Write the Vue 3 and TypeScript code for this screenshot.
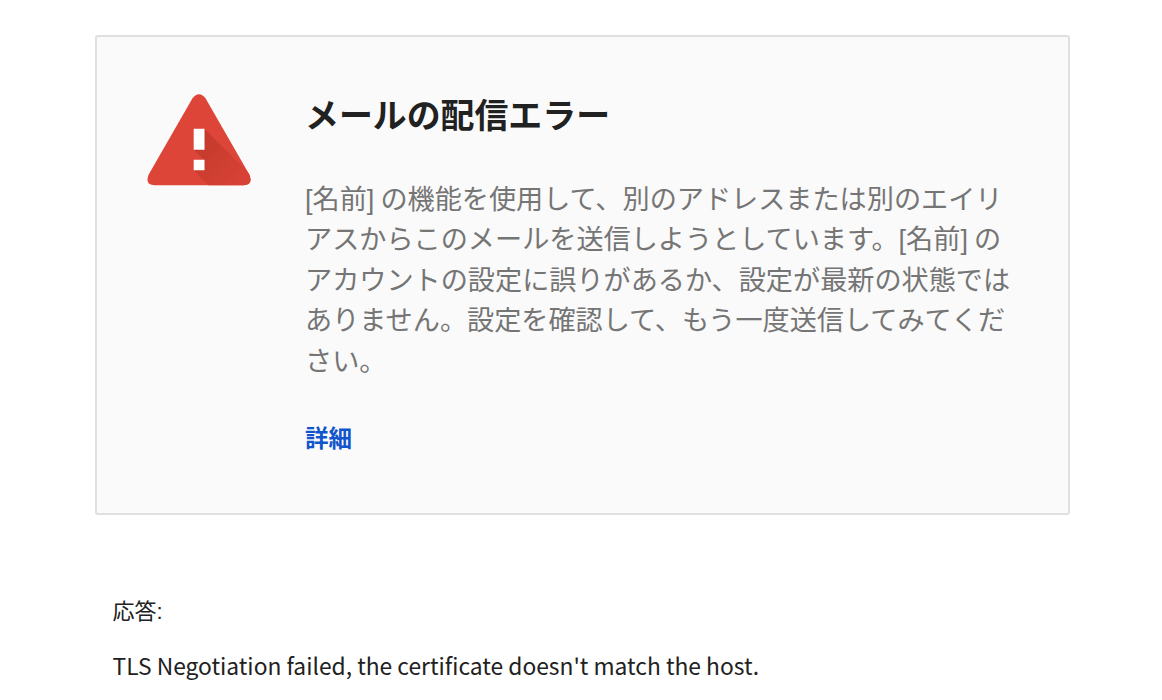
<template>
  <div class="page">
    <section class="card">
      <svg class="warning-icon" viewBox="0 0 104 92" width="104" height="92">
        <defs>
          <linearGradient id="shadow" x1="50" y1="55" x2="92" y2="92" gradientUnits="userSpaceOnUse">
            <stop offset="0" stop-color="#c43b2d" />
            <stop offset="1" stop-color="#d84235" />
          </linearGradient>
          <clipPath id="triangle">
            <path :d="trianglePath" />
          </clipPath>
        </defs>
        <path :d="trianglePath" fill="#de4539" />
        <!-- 感嘆符の影 -->
        <path
          d="M57.5 35 L104 81 V92 H62 L47 76.5 L57 66 L47 56 Z"
          fill="url(#shadow)"
          clip-path="url(#triangle)"
        />
        <path d="M46.7 34.7h10.8v21H46.7zM46.7 65.7h10.8v10.6H46.7z" fill="#fff" />
      </svg>
      <div class="content">
        <h1 class="title">メールの配信エラー</h1>
        <p class="message">
          <span v-for="line in lines" :key="line" class="line">{{ line }}</span>
        </p>
        <a class="detail">詳細</a>
      </div>
    </section>
    <section class="response">
      <p class="label">応答:</p>
      <p class="reason">TLS Negotiation failed, the certificate doesn't match the host.</p>
    </section>
  </div>
</template>

<script setup lang="ts">
// 角の丸い三角形
const trianglePath =
  "M45.5 4.2 Q52 -3.6 58.5 4.2 L102.3 80.5 Q106.5 90.8 96.5 91.3 H7.5 Q-2.5 90.8 1.7 80.5 Z";

const lines: string[] = [
  "[名前] の機能を使用して、別のアドレスまたは別のエイリ",
  "アスからこのメールを送信しようとしています。[名前] の",
  "アカウントの設定に誤りがあるか、設定が最新の状態では",
  "ありません。設定を確認して、もう一度送信してみてくだ",
  "さい。",
];
</script>

<style>
body {
  margin: 0;
  background: #fff;
}
</style>

<style scoped>
.page {
  box-sizing: border-box;
  height: 700px;
  padding: 35px 92px 0 95px;
  overflow: hidden;
  color: #212121;
  font-family: "Liberation Sans", "Noto Sans CJK JP", sans-serif;
}

.card {
  box-sizing: border-box;
  display: flex;
  width: 975px;
  height: 480px;
  padding: 57px 50px 0;
  border: 2px solid #e0e0e0;
  border-radius: 3px;
  background: #fafafa;
}

.warning-icon {
  flex: none;
}

.content {
  margin-left: 54px;
}

.title {
  margin: 1px 0 0;
  font-size: 33.9px;
  line-height: 42px;
  font-weight: 700;
}

.message {
  margin: 43px 0 0;
  color: #757575;
  font-size: 27.15px;
  line-height: 40.4px;
  word-spacing: -1.5px;
}

.line {
  display: block;
  white-space: nowrap;
}

.detail {
  display: block;
  margin-top: 41px;
  color: #1155cc;
  font-size: 23.5px;
  line-height: 32px;
  font-weight: 700;
}

.response {
  padding: 81.5px 0 0 17.5px;
}

.label,
.reason {
  margin: 0;
  font-size: 22px;
  line-height: 30px;
}

.reason {
  margin-top: 24.5px;
  font-family: "Noto Sans CJK JP", sans-serif;
  font-size: 22.8px;
  white-space: nowrap;
}
</style>
